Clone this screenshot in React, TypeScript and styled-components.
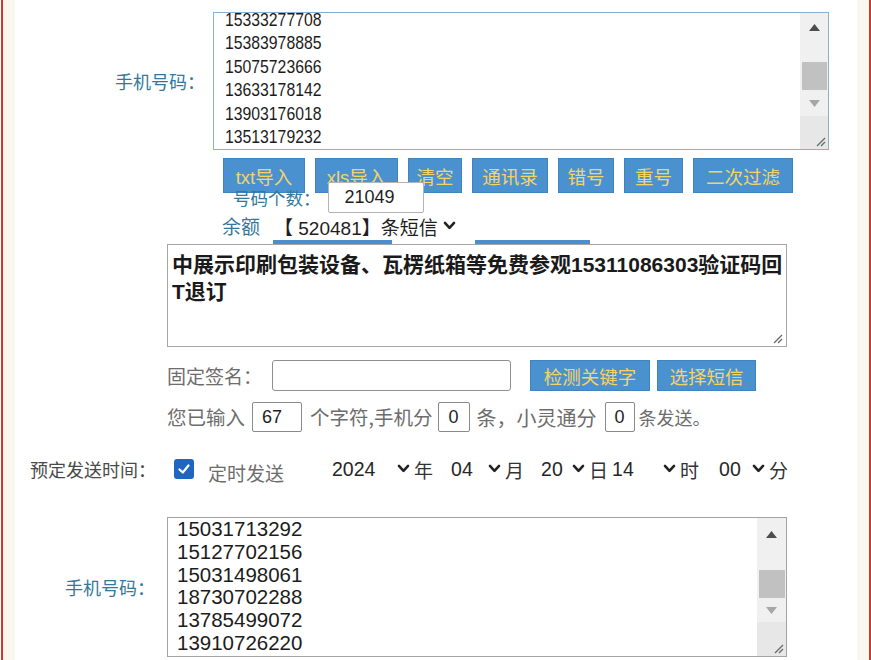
import React from "react";
import styled, { createGlobalStyle } from "styled-components";

const Global = createGlobalStyle`
  html, body { margin: 0; padding: 0; background: #fff; }
  body { font-family: "Liberation Sans", "Noto Sans CJK SC", sans-serif; }
  * { box-sizing: border-box; }
`;

const TEAL = "#35789a";
const GRAY = "#6d6d6d";

const Frame = styled.div`
  width: 871px;
  height: 660px;
  overflow: hidden;
  display: flex;
  padding-left: 1px;
  background: #fff;
`;
const RedRule = styled.div`
  width: 2px;
  flex: none;
  background: #cc3b2a;
`;
const Gutter = styled.div`
  width: 12px;
  flex: none;
  background: #f8f7f0;
`;
const Main = styled.main`
  flex: 1;
  min-width: 0;
  display: flex;
  flex-direction: column;
  background: #fff;
`;

const Row = styled.div<{ $top: number; $indent: number; $gap?: number; $h?: number }>`
  position: relative;
  display: flex;
  align-items: center;
  flex: none;
  margin-top: ${(p) => p.$top}px;
  padding-left: ${(p) => p.$indent}px;
  gap: ${(p) => p.$gap ?? 0}px;
  ${(p) => (p.$h ? `height:${p.$h}px;` : "")}
`;

const FieldLabel = styled.span<{ $w?: number; $tone: "teal" | "gray" | "dark"; $size?: number; $ml?: number; $dy?: number }>`
  ${(p) => (p.$w ? `width:${p.$w}px; text-align:right;` : "")}
  flex: none;
  margin-left: ${(p) => p.$ml ?? 0}px;
  ${(p) => (p.$dy ? `padding-top:${p.$dy}px;` : "")}
  font-family: "Noto Sans CJK SC", "Liberation Sans", sans-serif;
  font-size: ${(p) => p.$size ?? 18}px;
  line-height: 1.25;
  white-space: nowrap;
  color: ${(p) => (p.$tone === "teal" ? TEAL : p.$tone === "gray" ? GRAY : "#4a4a4a")};
`;

/* ---------- fake textarea ---------- */
const AreaBox = styled.div<{ $w: number; $h: number; $border: string }>`
  width: ${(p) => p.$w}px;
  height: ${(p) => p.$h}px;
  flex: none;
  border: 1px solid ${(p) => p.$border};
  background: #fff;
  display: flex;
  overflow: hidden;
`;
const AreaText = styled.div<{ $padLeft: number }>`
  flex: 1;
  min-width: 0;
  overflow: hidden;
  padding-left: ${(p) => p.$padLeft}px;
`;
const Lines = styled.div<{ $shift: number; $size: number; $lh: number; $narrow?: boolean }>`
  margin-top: ${(p) => p.$shift}px;
  font-family: "Liberation Sans", sans-serif;
  font-size: ${(p) => p.$size}px;
  line-height: ${(p) => p.$lh}px;
  color: #1c1c1c;
  white-space: pre;
  ${(p) => (p.$narrow ? "transform: scaleX(0.83); transform-origin: left top;" : "")}
`;
const ScrollCol = styled.div<{ $w: number }>`
  width: ${(p) => p.$w}px;
  flex: none;
  display: flex;
  flex-direction: column;
  background: #f0f0f0;
`;
const ArrowBtn = styled.div<{ $h: number }>`
  height: ${(p) => p.$h}px;
  flex: none;
  display: flex;
  align-items: center;
  justify-content: center;
`;
const Track = styled.div<{ $h: number }>`
  height: ${(p) => p.$h}px;
  flex: none;
  display: flex;
  flex-direction: column;
  align-items: center;
`;
const Thumb = styled.div<{ $top: number; $h: number }>`
  margin-top: ${(p) => p.$top}px;
  height: ${(p) => p.$h}px;
  width: calc(100% - 3px);
  background: #c1c1c1;
`;
const Corner = styled.div`
  flex: 1;
  background: #e7e7e7;
  display: flex;
  align-items: flex-end;
  justify-content: flex-end;
  padding: 0 2px 2px 0;
`;

const Grip = () => (
  <svg width="12" height="12" viewBox="0 0 12 12">
    <line x1="11" y1="3" x2="3" y2="11" stroke="#6a6a6a" strokeWidth="1.2" />
    <line x1="11" y1="7" x2="7" y2="11" stroke="#6a6a6a" strokeWidth="1.2" />
  </svg>
);
const Tri = ({ up, color }: { up?: boolean; color: string }) => (
  <svg width="11" height="7" viewBox="0 0 11 7">
    <polygon points={up ? "0,7 11,7 5.5,0" : "0,0 11,0 5.5,7"} fill={color} />
  </svg>
);

type ScrollSpec = { w: number; up: number; track: number; thumbTop: number; thumbH: number; down: number };
const ScrollBar = ({ s }: { s: ScrollSpec }) => (
  <ScrollCol $w={s.w}>
    <ArrowBtn $h={s.up}>
      <Tri up color="#4d4d4d" />
    </ArrowBtn>
    <Track $h={s.track}>
      <Thumb $top={s.thumbTop} $h={s.thumbH} />
    </Track>
    <ArrowBtn $h={s.down}>
      <Tri color="#a6a6a6" />
    </ArrowBtn>
    <Corner>
      <Grip />
    </Corner>
  </ScrollCol>
);

/* ---------- buttons / inputs ---------- */
const BlueButton = styled.button<{ $w: number; $h?: number; $ml?: number }>`
  width: ${(p) => p.$w}px;
  height: ${(p) => p.$h ?? 35}px;
  flex: none;
  padding: 0;
  margin: 0 0 0 ${(p) => p.$ml ?? 0}px;
  background: #4a92cf;
  border: 1px solid #3f84bf;
  color: #f4d469;
  font-family: "Liberation Sans", "Noto Sans CJK SC", sans-serif;
  font-size: 18.5px;
  display: flex;
  align-items: center;
  justify-content: center;
  cursor: pointer;
`;
const TextInput = styled.div<{ $w: number; $h: number; $pad?: number; $radius?: number; $border?: string; $ml?: number }>`
  width: ${(p) => p.$w}px;
  height: ${(p) => p.$h}px;
  flex: none;
  margin-left: ${(p) => p.$ml ?? 0}px;
  border: 1px solid ${(p) => p.$border ?? "#9a9a9a"};
  border-radius: ${(p) => p.$radius ?? 2}px;
  background: #fff;
  display: flex;
  align-items: center;
  padding-left: ${(p) => p.$pad ?? 8}px;
  font-family: "Liberation Sans", sans-serif;
  font-size: 18px;
  color: #1e1e1e;
`;
const NumBox = styled(TextInput)<{ $mr: number }>`
  margin-right: ${(p) => p.$mr}px;
`;
const Strip = styled.div<{ $w: number }>`
  width: ${(p) => p.$w}px;
  height: 4px;
  flex: none;
  background: #4a8fcb;
`;
const Balance = styled.span`
  font-family: "Liberation Sans", "Noto Sans CJK SC", sans-serif;
  font-size: 19px;
  color: #1e1e1e;
  white-space: nowrap;
  flex: none;
  margin-left: 14px;
`;
const ChevronSlot = styled.span`
  display: flex;
  margin-left: 5px;
`;

const MessageBox = styled.div`
  width: 620px;
  height: 103px;
  flex: none;
  border: 1px solid #a6a6a6;
  background: #fff;
  display: flex;
  flex-direction: column;
  padding: 6px 3px 2px 4px;
`;
const MessageText = styled.div`
  flex: 1;
  font-family: "Liberation Sans", "Noto Sans CJK SC", sans-serif;
  font-weight: 700;
  font-size: 21px;
  line-height: 27px;
  color: #1a1a1a;
  word-break: break-all;
`;
const GripRow = styled.div`
  display: flex;
  justify-content: flex-end;
`;

const Check = styled.span`
  width: 20px;
  height: 20px;
  flex: none;
  margin-left: 18px;
  border-radius: 3px;
  background: #1f66c2;
  display: flex;
  align-items: center;
  justify-content: center;
`;

const Select = styled.span<{ $w: number }>`
  width: ${(p) => p.$w}px;
  flex: none;
  display: flex;
  align-items: center;
  justify-content: space-between;
  font-family: "Liberation Sans", sans-serif;
  font-size: 19.5px;
  color: #262626;
`;
const Unit = styled.span<{ $mr: number }>`
  flex: none;
  margin-left: 4px;
  margin-right: ${(p) => p.$mr}px;
  font-family: "Noto Sans CJK SC", sans-serif;
  font-size: 19px;
  color: #333;
`;
const DateGroup = styled.div`
  display: flex;
  align-items: center;
  margin-left: 48px;
`;

const Chevron = ({ size = 13 }: { size?: number }) => (
  <svg width={size} height={size * 0.7} viewBox="0 0 14 10">
    <polyline points="2,2 7,7.5 12,2" fill="none" stroke="#222" strokeWidth="2.8" strokeLinecap="round" strokeLinejoin="round" />
  </svg>
);

const topNumbers = ["15333277708", "15383978885", "15075723666", "13633178142", "13903176018", "13513179232"];
const bottomNumbers = ["15031713292", "15127702156", "15031498061", "18730702288", "13785499072", "13910726220"];

const toolButtons: [string, number][] = [
  ["txt导入", 82],
  ["xls导入", 83],
  ["清空", 54],
  ["通讯录", 76],
  ["错号", 56],
  ["重号", 59],
  ["二次过滤", 100],
];

const dateParts: [string, number, string, number][] = [
  ["2024", 78, "年", 18],
  ["04", 50, "月", 17],
  ["20", 44, "日", 4],
  ["14", 64, "时", 20],
  ["00", 46, "分", 0],
];

export default function App() {
  return (
    <>
      <Global />
      <Frame>
        <RedRule />
        <Gutter />
        <Main>
          {/* top phone list */}
          <Row $top={12} $indent={0} $gap={8}>
            <FieldLabel $w={190} $tone="teal">手机号码：</FieldLabel>
            <AreaBox $w={616} $h={138} $border="#8cadd4">
              <AreaText $padLeft={11}>
                <Lines $shift={-5} $size={19} $lh={23.4} $narrow>
                  {topNumbers.join("\n")}
                </Lines>
              </AreaText>
              <ScrollBar s={{ w: 28, up: 28, track: 49, thumbTop: 21, thumbH: 28, down: 26 }} />
            </AreaBox>
          </Row>

          {/* tool buttons */}
          <Row $top={8} $indent={208} $gap={10}>
            {toolButtons.map(([t, w]) => (
              <BlueButton key={t} $w={w}>
                {t}
              </BlueButton>
            ))}
          </Row>

          {/* count (overlapping buttons) */}
          <Row $top={-11} $indent={218} $gap={7}>
            <FieldLabel $tone="teal" $size={17.5}>号码个数：</FieldLabel>
            <TextInput $w={96} $h={31} $pad={16} $border="#b3b3b3">21049</TextInput>
          </Row>

          {/* balance */}
          <Row $top={2} $indent={207} $h={22}>
            <FieldLabel $tone="teal" $size={19}>余额</FieldLabel>
            <Balance>【 520481】条短信</Balance>
            <ChevronSlot>
              <Chevron />
            </ChevronSlot>
          </Row>

          <Row $top={3} $indent={258} $gap={83}>
            <Strip $w={119} />
            <Strip $w={115} />
          </Row>

          {/* message */}
          <Row $top={0} $indent={152}>
            <MessageBox>
              <MessageText>中展示印刷包装设备、瓦楞纸箱等免费参观15311086303验证码回T退订</MessageText>
              <GripRow>
                <Grip />
              </GripRow>
            </MessageBox>
          </Row>

          {/* signature */}
          <Row $top={13} $indent={152}>
            <FieldLabel $tone="gray" $size={19}>固定签名：</FieldLabel>
            <TextInput $w={239} $h={31} $radius={3} $border="#8f8f8f" $ml={10} />
            <BlueButton $w={120} $h={31} $ml={19}>
              检测关键字
            </BlueButton>
            <BlueButton $w={99} $h={31} $ml={7}>
              选择短信
            </BlueButton>
          </Row>

          {/* char count */}
          <Row $top={11} $indent={152}>
            <FieldLabel $tone="gray" $size={19.5}>您已输入</FieldLabel>
            <NumBox $w={50} $h={30} $pad={9} $ml={7} $mr={8} $border="#8a8a8a">67</NumBox>
            <FieldLabel $tone="gray" $size={19.5}>个字符,手机分</FieldLabel>
            <NumBox $w={32} $h={30} $pad={9} $ml={6} $mr={6} $border="#8a8a8a">0</NumBox>
            <FieldLabel $tone="gray" $size={20}>条，小灵通分</FieldLabel>
            <NumBox $w={30} $h={30} $pad={8} $ml={9} $mr={3} $border="#8a8a8a">0</NumBox>
            <FieldLabel $tone="gray" $size={18}>条发送。</FieldLabel>
          </Row>

          {/* schedule */}
          <Row $top={25} $indent={15} $h={24}>
            <FieldLabel $tone="dark" $size={18}>预定发送时间：</FieldLabel>
            <Check>
              <svg width="14" height="14" viewBox="0 0 14 14">
                <polyline points="2.5,7.5 5.8,10.5 11.5,3.5" fill="none" stroke="#fff" strokeWidth="2.2" strokeLinecap="round" strokeLinejoin="round" />
              </svg>
            </Check>
            <FieldLabel $tone="gray" $size={19} $ml={14} $dy={7}>
              定时发送
            </FieldLabel>
            <DateGroup>
              {dateParts.map(([v, w, u, mr]) => (
                <React.Fragment key={u}>
                  <Select $w={w}>
                    {v}
                    <Chevron />
                  </Select>
                  <Unit $mr={mr}>{u}</Unit>
                </React.Fragment>
              ))}
            </DateGroup>
          </Row>

          {/* bottom phone list */}
          <Row $top={36} $indent={0} $gap={12}>
            <FieldLabel $w={140} $tone="teal">手机号码：</FieldLabel>
            <AreaBox $w={620} $h={140} $border="#a3a3a3">
              <AreaText $padLeft={9}>
                <Lines $shift={0} $size={20.5} $lh={22.8}>
                  {bottomNumbers.join("\n")}
                </Lines>
              </AreaText>
              <ScrollBar s={{ w: 29, up: 32, track: 48, thumbTop: 20, thumbH: 28, down: 24 }} />
            </AreaBox>
          </Row>
        </Main>
        <Gutter />
        <RedRule />
      </Frame>
    </>
  );
}
